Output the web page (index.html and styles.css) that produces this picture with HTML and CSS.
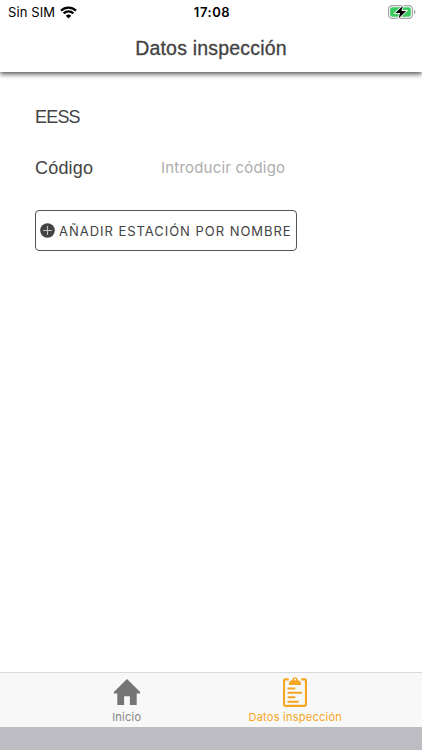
FILE: index.html
```html
<!DOCTYPE html>
<html lang="es">
<head>
<meta charset="utf-8">
<title>Datos inspección</title>
<link rel="stylesheet" href="styles.css">
</head>
<body>
<div class="app">
  <header class="header">
    <div class="status">
      <div class="carrier"><span>Sin SIM</span>
        <svg class="wifi" viewBox="0 0 17 13"><path d="M1 4.600a10.700 10.700 0 0 1 15 0M3.700 7.400a6.800 6.800 0 0 1 9.600 0" fill="none" stroke="#000" stroke-width="2.200"/><path d="M5.800 9.700a3.900 3.900 0 0 1 5.400 0L8.500 12.500z"/></svg>
      </div>
      <div class="time">17:08</div>
      <svg class="battery" viewBox="0 0 28 14"><rect x=".6" y=".6" width="23.800" height="12.800" rx="3.600" fill="#fff" stroke="#a5a5a5" stroke-width="1.200"/><rect x="2.200" y="2.200" width="20.600" height="9.600" rx="2" fill="#3acb5f"/><path d="M26 4.800v4.400q1.500-.5 1.500-2.200T26 4.800z" fill="#a5a5a5"/><path d="M14.800.8 7.400 7.900h4.600l-1.500 5.500 7.600-7.500h-4.600z" stroke="#fff" stroke-width="1.800" paint-order="stroke"/></svg>
    </div>
    <h1 class="title">Datos inspección</h1>
  </header>
  <main class="content">
    <h2 class="section">EESS</h2>
    <div class="row">
      <label class="label" for="code">Código</label>
      <input class="input" id="code" placeholder="Introducir código">
    </div>
    <button class="add">
      <svg class="plus" viewBox="0 0 15 15"><circle cx="7.500" cy="7.500" r="7.300" fill="#434343"/><path d="M7.500 3.100v8.800M3.100 7.500h8.800" stroke="#c4c4c4" stroke-width="1.100"/></svg>
      <span>AÑADIR ESTACIÓN POR NOMBRE</span>
    </button>
  </main>
  <nav class="tabs">
    <a class="tab">
      <svg class="home" viewBox="0 0 28 32"><path d="M14 3 27.500 16.500v1.500H24V30h-7v-9h-6v9H4V18H.5v-1.500z" fill="#757575"/></svg>
      <span class="home-label">Inicio</span>
    </a>
    <a class="tab active">
      <svg class="clip" viewBox="0 0 28 32"><path d="M7.500 3.500H3.800q-1.100 0-1.100 1.100v25.200q0 1.100 1.100 1.100h20.400q1.100 0 1.100-1.100V4.600q0-1.100-1.100-1.100H20.500" fill="none" stroke="#f5a623" stroke-width="2.200"/><path d="M7.800 9.200V7.400q0-2.200 2.300-2.700.9-.2 1.100-1.200a2.900 2.900 0 0 1 5.600 0q.2 1 1.100 1.200 2.300.5 2.300 2.700v1.800zM14 2.700a1 1 0 1 0 0 2 1 1 0 0 0 0-2z" fill="#f5a623" fill-rule="evenodd"/><path d="M6.300 12.900h8M6.300 17.400h15M6.300 22h8M6.300 26.500h11.500" stroke="#f5a623" stroke-width="2.100"/></svg>
      <span class="clip-label">Datos inspección</span>
    </a>
  </nav>
  <div class="bottom"></div>
</div>
</body>
</html>
```
FILE: styles.css
```css
* { box-sizing: border-box; }
body { margin: 0; background: #fff; }
.app { width: 422px; height: 750px; display: flex; flex-direction: column; overflow: hidden; font-family: Inter, sans-serif; color: #434343; }
.header { height: 72px; flex: none; background: #fff; box-shadow: 0 2px 5px rgba(0,0,0,.7); }
.status { height: 24px; display: grid; grid-template-columns: 1fr auto 1fr; align-items: center; padding: 0 6px 0 8px; color: #000; }
.carrier { display: flex; align-items: center; gap: 5px; font-size: 13px; line-height: 24px; letter-spacing: .1px; }
.wifi { width: 17px; height: 13px; }
.time { font-size: 13px; font-weight: 600; letter-spacing: .55px; }
.battery { width: 28px; height: 14px; justify-self: end; margin-top: -1px; }
.title { margin: 0; text-align: center; font: 400 19.500px/48px "Liberation Sans", Arial, sans-serif; letter-spacing: .2px; -webkit-text-stroke: .3px #434343; }
.content { flex: 1; padding: 32px 35px 0; }
.section { margin: 0; font: 400 18px/26px "Liberation Sans", Arial, sans-serif; letter-spacing: -.8px; }
.row { display: flex; align-items: center; height: 28px; margin-top: 24px; }
.label { width: 126px; font: 400 18px/26px "Liberation Sans", Arial, sans-serif; letter-spacing: .2px; }
.input { width: 170px; border: 0; padding: 0; outline: 0; background: transparent; font: 400 15px/24px Inter, sans-serif; letter-spacing: .2px; }
.input::placeholder { color: #adadad; opacity: 1; }
.add { display: flex; align-items: center; width: 262px; height: 41px; margin: 28px 0 0; padding: 0 0 0 4px; gap: 4px; background: #fff; border: 1.500px solid #555; border-radius: 4px; color: #434343; font: 400 13px/20px Inter, sans-serif; letter-spacing: .97px; white-space: nowrap; }
.plus { width: 15px; height: 15px; flex: none; }
.tabs { height: 55px; flex: none; display: flex; justify-content: center; background: #f8f8f8; border-top: 1px solid #d8d8d8; }
.tab { width: 168.500px; display: flex; flex-direction: column; align-items: center; padding-top: 3px; color: #858585; font-size: 11px; line-height: 20px; letter-spacing: .25px; }
.tab svg { width: 28px; height: 32px; }
.active { color: #f5a623; }
.bottom { height: 23px; flex: none; background: #bdbcc2; }
```
